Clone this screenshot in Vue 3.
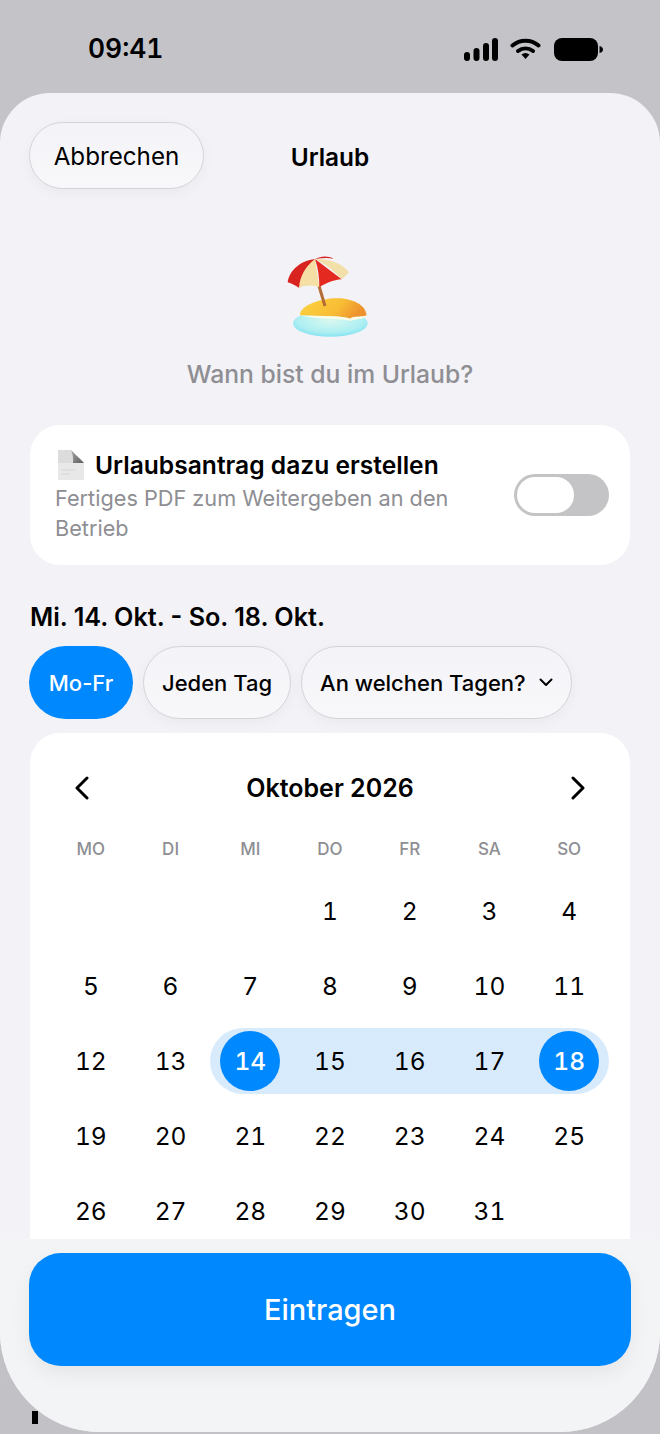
<template>
  <div class="screen">
    <div class="behind"></div>
    <header class="status">
      <span class="time">09:41</span>
      <div class="status-icons">
        <svg width="34" height="23" viewBox="0 0 34 23" fill="#000">
          <rect x="0" y="14" width="6" height="9" rx="3" />
          <rect x="9.5" y="10" width="6" height="13" rx="3" />
          <rect x="19" y="5" width="6" height="18" rx="3" />
          <rect x="28" y="0" width="6" height="23" rx="3" />
        </svg>
        <svg class="wifi" width="31" height="22" viewBox="0 0 31 22" fill="none" stroke="#000" stroke-width="4" stroke-linecap="round">
          <path d="M2.5 7.5 C10 1 21 1 28.5 7.5" />
          <path d="M8 13 C12.500 9.500 18.500 9.500 23 13" />
          <path d="M11.500 16.500 L15.500 21 L19.500 16.500 C17 14.500 14 14.500 11.500 16.500 Z" fill="#000" stroke="none" />
        </svg>
        <svg class="battery" width="49" height="23" viewBox="0 0 49 23" fill="#000">
          <rect x="0" y="0" width="44" height="23" rx="8" />
          <path d="M45.500 8 C48 8.500 49 10 49 11.500 C49 13 48 14.500 45.500 15 Z" />
        </svg>
      </div>
    </header>

    <main class="sheet">
      <div class="nav">
        <button class="glass cancel">Abbrechen</button>
        <span class="nav-title">Urlaub</span>
      </div>

      <svg class="beach" width="160" height="110" viewBox="0 0 480 330">
        <defs>
          <linearGradient id="sand" x1="0" y1="0" x2="1" y2="0.25">
            <stop offset="0" stop-color="#fbd33f" />
            <stop offset="0.65" stop-color="#f8bd35" />
            <stop offset="1" stop-color="#ee922e" />
          </linearGradient>
          <radialGradient id="water" cx="0.5" cy="0.4" r="0.62">
            <stop offset="0" stop-color="#d9f8ef" />
            <stop offset="0.7" stop-color="#aeeff2" />
            <stop offset="1" stop-color="#84e2f1" />
          </radialGradient>
        </defs>
        <ellipse cx="241" cy="250" rx="112" ry="40" fill="url(#water)" />
        <path d="M150 226 C150 198 200 180 250 175 C300 171 348 192 350 226 C335 234 315 226 300 236 C270 226 200 230 150 226 Z" fill="url(#sand)" />
        <path d="M150 226 C200 230 270 226 300 236 C315 226 335 234 350 226 C345 238 320 238 300 242 C260 234 190 238 150 226 Z" fill="#fbfbe6" />
        <path d="M207 138 L225 198" stroke="#b56c35" stroke-width="9" />
        <path d="M195 57 C150 62 118 92 113 127 C125 130 135 136 147 143 Z" fill="#d8231f" />
        <path d="M195 57 C165 80 150 110 147 143 C165 135 190 135 208 142 Z" fill="#f6dfa5" />
        <path d="M195 57 C205 85 208 115 208 142 C225 130 250 120 275 118 Z" fill="#e42a20" />
        <path d="M195 57 C225 70 255 95 275 118 C283 110 292 105 297 97 C280 72 240 55 195 57 Z" fill="#f3dfa8" />
        <path d="M195 57 C212 48 232 46 252 56 C235 53 215 54 195 57 Z" fill="#d8231f" />
      </svg>

      <p class="question">Wann bist du im Urlaub?</p>

      <section class="card request">
        <div class="request-text">
          <div class="request-title">
            <svg class="doc" width="26" height="30" viewBox="0 0 26 30">
              <defs>
                <linearGradient id="fold" x1="0" y1="0" x2="1" y2="1">
                  <stop offset="0" stop-color="#a8a8a8" />
                  <stop offset="1" stop-color="#5c5c5c" />
                </linearGradient>
              </defs>
              <path d="M0 0 H13 L26 13 V30 H0 Z" fill="#e8e8e8" />
              <path d="M0 0 H13 C15 4 15 8 15 13 H0 Z" fill="#dcdcdc" />
              <path d="M13 0 C17 4 22 9 26 13 H15 C15.500 9 15 5 13 0 Z" fill="url(#fold)" />
              <path d="M4 20 H18 M4 24 H12" stroke="#d6d6d6" stroke-width="1" />
            </svg>
            <span>Urlaubsantrag dazu erstellen</span>
          </div>
          <p class="request-sub">Fertiges PDF zum Weitergeben an den Betrieb</p>
        </div>
        <div class="toggle"><span class="knob"></span></div>
      </section>

      <h2 class="range">Mi. 14. Okt. - So. 18. Okt.</h2>

      <div class="chips">
        <button class="chip chip-active">Mo-Fr</button>
        <button class="chip glass">Jeden Tag</button>
        <button class="chip glass chip-menu">
          An welchen Tagen?
          <svg width="14" height="9" viewBox="0 0 14 9" fill="none" stroke="#000" stroke-width="2" stroke-linecap="round" stroke-linejoin="round">
            <path d="M1.500 1.500 L7 7 L12.500 1.500" />
          </svg>
        </button>
      </div>

      <section class="card calendar">
        <div class="cal-head">
          <svg width="14" height="24" viewBox="0 0 14 24" fill="none" stroke="#000" stroke-width="3" stroke-linecap="round" stroke-linejoin="round">
            <path d="M12 2 L2 12 L12 22" />
          </svg>
          <span>Oktober 2026</span>
          <svg width="14" height="24" viewBox="0 0 14 24" fill="none" stroke="#000" stroke-width="3" stroke-linecap="round" stroke-linejoin="round">
            <path d="M2 2 L12 12 L2 22" />
          </svg>
        </div>
        <div class="weekdays">
          <span v-for="w in weekdays" :key="w">{{ w }}</span>
        </div>
        <div class="days">
          <div v-for="(c, i) in cells" :key="i" class="cell">
            <div v-if="c" class="band" :class="{ inrange: inRange(c), first: c === rangeStart, last: c === rangeEnd }">
              <span class="num" :class="{ picked: c === rangeStart || c === rangeEnd }">{{ c }}</span>
            </div>
          </div>
        </div>
      </section>

      <footer class="footer">
        <button class="submit">Eintragen</button>
      </footer>
    </main>
  </div>
</template>

<script setup>
const weekdays = ['MO', 'DI', 'MI', 'DO', 'FR', 'SA', 'SO'];
const rangeStart = 14;
const rangeEnd = 18;

// Oktober 2026 beginnt an einem Donnerstag
const cells = [null, null, null];
for (let d = 1; d <= 31; d++) cells.push(d);

function inRange(d) {
  return d >= rangeStart && d <= rangeEnd;
}
</script>

<style>
body {
  background: #c3c2c7;
}
</style>

<style scoped>
.screen {
  position: relative;
  width: 660px;
  height: 1434px;
  overflow: hidden;
  background: linear-gradient(#c4c3c8, #c2c2c6);
  font-family: Inter, "Liberation Sans", sans-serif;
  color: #000;
}
.behind {
  position: absolute;
  left: 32px;
  top: 1411px;
  width: 6px;
  height: 13px;
  background: #000;
}
.status {
  height: 93px;
  box-sizing: border-box;
  padding: 37px 57px 0 88px;
  display: flex;
  justify-content: space-between;
  align-items: flex-start;
}
.time {
  font-size: 26.4px;
  font-weight: 600;
  line-height: 23px;
  font-variant-numeric: tabular-nums;
}
.status-icons {
  display: flex;
  align-items: flex-start;
  gap: 12px;
  padding-top: 1px;
}
.wifi {
  margin-right: 1px;
}
.sheet {
  position: relative;
  height: 1339px;
  overflow: hidden;
  box-sizing: border-box;
  padding: 29px 30px 0;
  background: #f2f2f7;
  border-radius: 50px 50px 100px 100px;
}
.glass {
  background: linear-gradient(#f4f4f8, #f8f8fb);
  border: 1px solid #d3d3d8;
  box-shadow: 0 4px 14px #0000000a;
  font-family: inherit;
  color: #000;
}
.nav {
  position: relative;
  display: flex;
  align-items: center;
  height: 67px;
}
.cancel {
  height: 67px;
  width: 175px;
  margin-left: -1px;
  padding: 2px 0 0;
  border-radius: 34px;
  font-size: 24.2px;
}
.nav-title {
  position: absolute;
  left: 0;
  right: 0;
  padding-top: 2px;
  text-align: center;
  font-size: 24.4px;
  font-weight: 600;
}
.beach {
  display: block;
  margin: 51px auto 0;
  filter: blur(0.4px);
}
.question {
  margin: 9px 0 0;
  text-align: center;
  font-size: 24.7px;
  font-weight: 500;
  line-height: 30px;
  color: #8e8e93;
}
.card {
  background: #fff;
  border-radius: 30px;
}
.request {
  margin-top: 36px;
  padding: 25px 21px 22px 25px;
  display: flex;
  align-items: center;
  justify-content: space-between;
}
.request-text {
  width: 400px;
}
.request-title {
  display: flex;
  align-items: center;
  gap: 11px;
  padding-left: 3px;
  font-size: 24.6px;
  font-weight: 600;
  line-height: 30px;
}
.doc {
  filter: blur(0.4px);
}
.request-sub {
  margin: 3px 0 0;
  font-size: 21.7px;
  line-height: 30px;
  color: #8e8e93;
}
.toggle {
  width: 95px;
  height: 42px;
  margin-bottom: 4px;
  box-sizing: border-box;
  padding: 3px;
  border-radius: 21px;
  background: #c4c4c6;
}
.knob {
  display: block;
  width: 57px;
  height: 36px;
  border-radius: 18px;
  background: #fff;
}
.range {
  margin: 37px 0 0;
  font-size: 25.2px;
  font-weight: 600;
  line-height: 30px;
}
.chips {
  margin: 14px 0 0 -1px;
  display: flex;
  gap: 10px;
}
.chip {
  height: 73px;
  padding: 0 18px;
  box-sizing: border-box;
  border-radius: 37px;
  font-family: inherit;
  font-size: 22px;
  font-weight: 500;
}
.chip-active {
  width: 104px;
  padding: 0;
  border: none;
  background: #0088ff;
  color: #fff;
}
.chip-menu {
  display: flex;
  align-items: center;
  gap: 13px;
}
.calendar {
  margin-top: 14px;
  padding: 40px 21px 40px;
}
.cal-head {
  display: flex;
  justify-content: space-between;
  align-items: center;
  height: 30px;
  padding: 0 24px;
  font-size: 25px;
  font-weight: 600;
}
.weekdays {
  margin-top: 36px;
  display: grid;
  grid-template-columns: repeat(7, 1fr);
  text-align: center;
  font-size: 17px;
  font-weight: 500;
  line-height: 20px;
  color: #8e8e93;
}
.days {
  margin-top: 14px;
  display: grid;
  grid-template-columns: repeat(7, 1fr);
  grid-auto-rows: 75px;
}
.cell {
  display: flex;
  align-items: center;
}
.band {
  flex: 1;
  height: 66px;
  display: flex;
  align-items: center;
  justify-content: center;
}
.inrange {
  background: #d8ebfd;
}
.first {
  border-radius: 33px 0 0 33px;
}
.last {
  border-radius: 0 33px 33px 0;
}
.num {
  width: 60px;
  height: 60px;
  display: flex;
  align-items: center;
  justify-content: center;
  border-radius: 50%;
  font-size: 24.5px;
  font-variant-numeric: tabular-nums;
}
.picked {
  background: #0088ff;
  color: #fff;
  font-weight: 500;
}
.footer {
  position: absolute;
  left: 0;
  right: 0;
  bottom: 0;
  height: 193px;
  box-sizing: border-box;
  padding: 14px 29px 0;
  background: #f3f4f5;
}
.submit {
  display: block;
  width: 100%;
  height: 113px;
  border: none;
  border-radius: 32px;
  background: #0088ff;
  box-shadow: 0 8px 20px #0000000f;
  color: #fff;
  font-family: inherit;
  font-size: 29px;
  font-weight: 500;
}
</style>
